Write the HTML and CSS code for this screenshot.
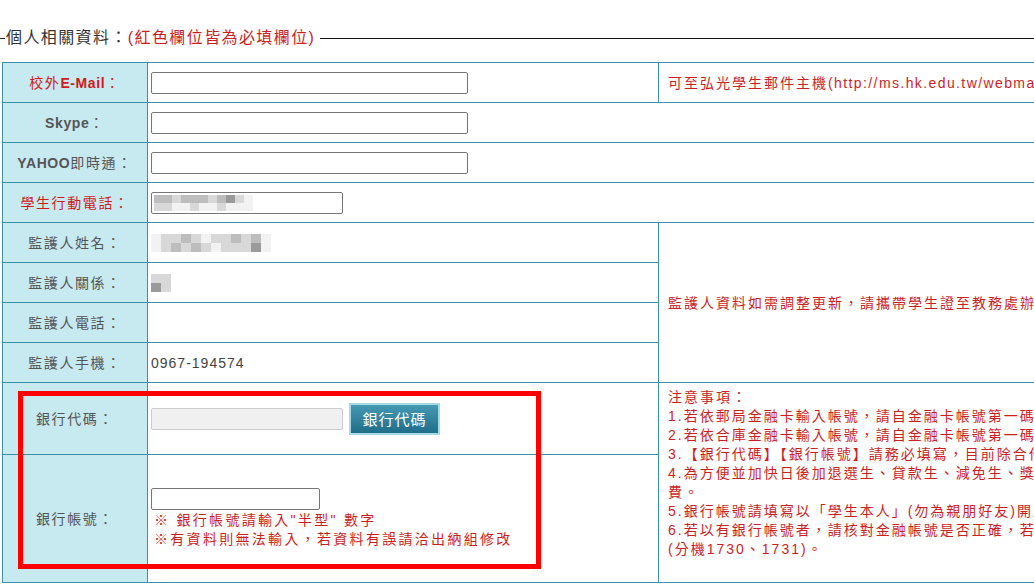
FILE: index.html
```html
<!DOCTYPE html>
<html lang="zh-Hant">

<head>
    <meta charset="UTF-8">
    <meta name="viewport" content="width=device-width, initial-scale=1.0">
    <title>個人相關資料</title>
    <link rel="stylesheet" href="styles.css">
</head>

<body>
    <div class="cont">
        <div class="leyenda">
            <span class="lineaIzq"></span>
            <span class="leyendaTxt">個人相關資料：<span class="rojo">(紅色欄位皆為必填欄位)</span></span>
            <span class="lineaDer"></span>
        </div>

        <div class="cajaTabla">
            <table class="tabla">
                <colgroup>
                    <col class="c1">
                    <col class="c2">
                    <col class="c3">
                </colgroup>
                <tr>
                    <th class="req">校外<b>E-Mail</b>：</th>
                    <td><input class="campo" type="text"></td>
                    <td class="nota">可至弘光學生郵件主機<span class="url">(http://ms.hk.edu.tw/webmail)</span>申請校內信箱</td>
                </tr>
                <tr>
                    <th><b>Skype</b>：</th>
                    <td colspan="2"><input class="campo" type="text"></td>
                </tr>
                <tr>
                    <th><b>YAHOO</b>即時通：</th>
                    <td colspan="2"><input class="campo" type="text"></td>
                </tr>
                <tr>
                    <th class="req">學生行動電話：</th>
                    <td colspan="2">
                        <div class="campo corto falso">
                            <div class="mosaico">
                                <span class="m2"></span><span class="m2"></span><span class="m1"></span><span class="m2"></span><span class="m2"></span><span class="m2"></span><span class="m1"></span><span class="m2"></span><span class="m3"></span><span class="m1"></span><span class="m0"></span>
                            </div>
                            <div class="mosaico">
                                <span class="m1"></span><span class="m1"></span><span class="m0"></span><span class="m0"></span><span class="m1"></span><span class="m0"></span><span class="m0"></span><span class="m1"></span><span class="m0"></span><span class="m0"></span><span class="m0"></span>
                            </div>
                        </div>
                    </td>
                </tr>
                <tr>
                    <th>監護人姓名：</th>
                    <td>
                        <div class="mosaicoCaja">
                            <div class="mosaico">
                                <span class="m0"></span><span class="m1"></span><span class="m1"></span><span class="m2"></span><span class="m1"></span><span class="m0"></span><span class="m1"></span><span class="m1"></span><span class="m2"></span><span class="m1"></span><span class="m2"></span><span class="m0"></span>
                            </div>
                            <div class="mosaico">
                                <span class="m0"></span><span class="m1"></span><span class="m2"></span><span class="m1"></span><span class="m2"></span><span class="m1"></span><span class="m0"></span><span class="m1"></span><span class="m1"></span><span class="m1"></span><span class="m3"></span><span class="m0"></span>
                            </div>
                        </div>
                    </td>
                    <td class="nota centro" rowspan="4">監護人資料如需調整更新，請攜帶學生證至教務處辦理更新作業。</td>
                </tr>
                <tr>
                    <th>監護人關係：</th>
                    <td>
                        <div class="mosaicoCaja">
                            <div class="mosaico"><span class="m1"></span><span class="m1"></span></div>
                            <div class="mosaico"><span class="m3"></span><span class="m1"></span></div>
                        </div>
                    </td>
                </tr>
                <tr>
                    <th>監護人電話：</th>
                    <td></td>
                </tr>
                <tr>
                    <th>監護人手機：</th>
                    <td class="valor">0967-194574</td>
                </tr>
                <tr class="filaBanco">
                    <th>銀行代碼：</th>
                    <td>
                        <input class="campo corto gris" type="text" disabled>
                        <button class="bottonBanco">銀行代碼</button>
                    </td>
                    <td class="nota notas" rowspan="2">
                        注意事項：<br>
                        1.若依郵局金融卡輸入帳號，請自金融卡帳號第一碼開始輸入，共14碼。<br>
                        2.若依合庫金融卡輸入帳號，請自金融卡帳號第一碼開始輸入，共13碼。<br>
                        3.【銀行代碼】【銀行帳號】請務必填寫，目前除合作金庫及郵局外皆須扣手續費。<br>
                        4.為方便並加快日後加退選生、貸款生、減免生、獎助學金等撥款作業，請填寫帳號以利退<br>
                        費。<br>
                        5.銀行帳號請填寫以「學生本人」(勿為親朋好友)開立之帳戶。<br>
                        6.若以有銀行帳號者，請核對金融帳號是否正確，若有錯誤請洽出納組<br>
                        (分機1730、1731)。
                    </td>
                </tr>
                <tr class="filaCuenta">
                    <th>銀行帳號：</th>
                    <td>
                        <input class="campo cuenta" type="text">
                        <div class="aviso">※ 銀行帳號請輸入"半型" 數字</div>
                        <div class="aviso">※有資料則無法輸入，若資料有誤請洽出納組修改</div>
                    </td>
                </tr>
            </table>
            <div class="marcaRoja"></div>
        </div>
    </div>
</body>

</html>
```

FILE: styles.css
```css
body {
    margin: 0;
    background: white;
    color: #555;
    font-family: "Liberation Sans", Arial, "Noto Sans CJK TC", sans-serif;
    font-size: 14px;
    overflow: hidden;
}

.cont {
    width: 1500px;
}

.leyenda {
    display: flex;
    align-items: center;
    height: 20px;
    margin-top: 28px;
    margin-bottom: 14px;
}

.lineaIzq {
    width: 5px;
    border-top: 1px solid #222;
}

.leyendaTxt {
    font-size: 16px;
    color: #333;
    line-height: 20px;
    letter-spacing: 1.4px;
    white-space: nowrap;
    padding: 0 1px;
}

.rojo {
    color: #cc1f1f;
}

.lineaDer {
    flex: 1;
    border-top: 1px solid #111;
    margin-left: 4px;
}

.cajaTabla {
    position: relative;
    padding-left: 2px;
}

.tabla {
    border-collapse: collapse;
    table-layout: fixed;
    width: 1300px;
}

.c1 {
    width: 145px;
}

.c2 {
    width: 511px;
}

.tabla th,
.tabla td {
    border: 1px solid #3a93a6;
    height: 39px;
    padding: 0;
    line-height: 18px;
    letter-spacing: 1px;
}

.tabla th {
    background: #c7e9f0;
    color: #555;
    font-weight: normal;
    text-align: center;
    letter-spacing: 1.6px;
}

.tabla th b {
    font-weight: bold;
    letter-spacing: 0.6px;
}

.tabla th.req {
    color: #d21a1a;
}

.tabla td {
    padding-left: 3px;
    white-space: nowrap;
}

.campo {
    box-sizing: border-box;
    width: 317px;
    height: 22px;
    border: 1px solid #767676;
    border-radius: 2px;
    padding: 1px 3px;
    vertical-align: middle;
    margin: 0;
}

.corto {
    width: 192px;
}

.cuenta {
    width: 169px;
    display: block;
    margin-bottom: 1px;
}

.gris {
    background: #f0f0f0;
    border: 1px solid #ccc;
}

.falso {
    padding: 2px 2px;
}

.mosaico {
    display: flex;
}

.mosaico span {
    width: 9px;
    height: 8px;
}

.mosaicoCaja .mosaico span {
    width: 10px;
    height: 9px;
}

.m0 {
    background: #f2f2f2;
}

.m1 {
    background: #d8d8d8;
}

.m2 {
    background: #bdbdbd;
}

.m3 {
    background: #9a9a9a;
}

.valor {
    color: #444;
}

.tabla .nota {
    color: #cc1f1f;
    padding-left: 9px;
    letter-spacing: 2px;
}

.tabla .nota .url {
    letter-spacing: 1.4px;
}

.tabla .notas {
    vertical-align: top;
    padding-top: 5px;
    line-height: 19px;
}

.filaBanco th,
.filaBanco td {
    height: 71px;
}

.filaCuenta th,
.filaCuenta td {
    height: 127px;
}

.bottonBanco {
    height: 32px;
    width: 91px;
    margin-left: 1px;
    vertical-align: middle;
    border: 2px solid #a6d8e6;
    background: linear-gradient(#4599b3, #1f6e8a);
    color: white;
    font-family: "Noto Sans CJK TC", sans-serif;
    font-size: 15px;
    letter-spacing: 1px;
    padding: 0;
}

.aviso {
    color: #cc1f1f;
    padding-left: 3px;
    line-height: 19px;
    letter-spacing: 2.3px;
}

.marcaRoja {
    position: absolute;
    left: 18px;
    top: 329px;
    width: 513px;
    height: 168px;
    border: 5px solid #ff0000;
}
```
